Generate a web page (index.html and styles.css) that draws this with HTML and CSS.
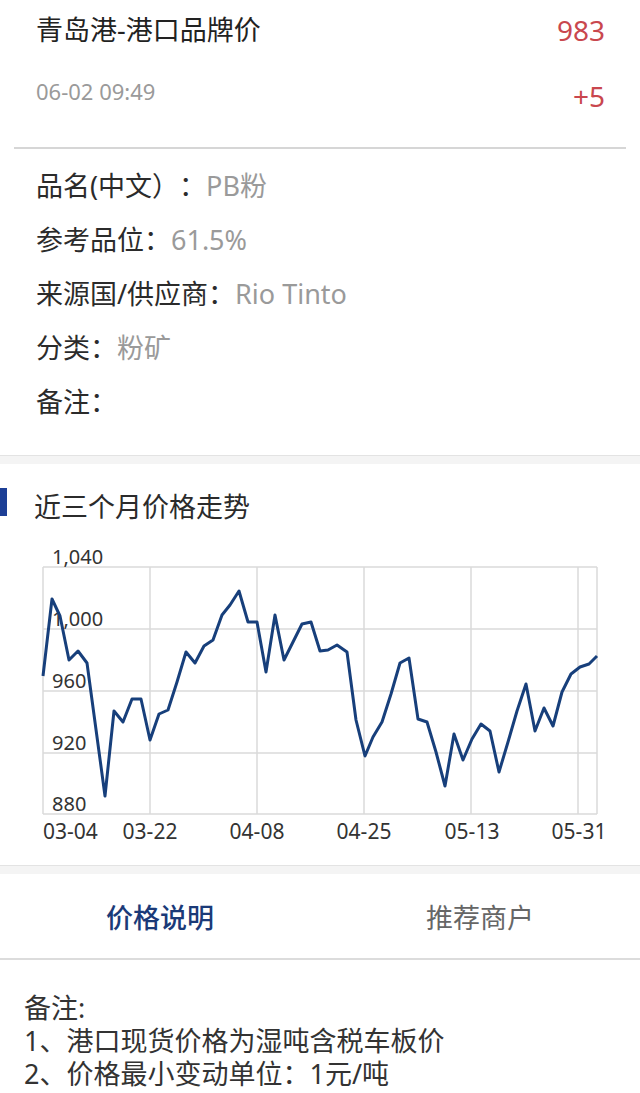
FILE: index.html
```html
<!DOCTYPE html>
<html lang="zh-CN">
<head>
  <meta charset="UTF-8" />
  <meta name="viewport" content="width=device-width, initial-scale=1" />
  <title>青岛港-港口品牌价</title>
  <link rel="stylesheet" href="styles.css">
</head>
<body>
  <div class="header">
    <div class="header-row">
      <span class="title">青岛港-港口品牌价</span>
      <span class="price">983</span>
    </div>
    <div class="header-row sub">
      <span class="time">06-02 09:49</span>
      <span class="change">+5</span>
    </div>
  </div>
  <div class="divider"></div>

  <div class="info">
    <div class="info-row">品名(中文）：<span class="value">PB粉</span></div>
    <div class="info-row">参考品位：<span class="value">61.5%</span></div>
    <div class="info-row">来源国/供应商：<span class="value">Rio Tinto</span></div>
    <div class="info-row">分类：<span class="value">粉矿</span></div>
    <div class="info-row">备注：</div>
  </div>

  <div class="section chart-section">
    <div class="section-title">
      <span class="bar"></span>
      <span>近三个月价格走势</span>
    </div>
    <svg class="chart" width="640" height="330" viewBox="0 528 640 330">
      <g stroke="#dadada" stroke-width="1.5">
        <line x1="43" y1="568" x2="597" y2="568" />
        <line x1="43" y1="630" x2="597" y2="630" />
        <line x1="43" y1="692" x2="597" y2="692" />
        <line x1="43" y1="754" x2="597" y2="754" />
        <line x1="43" y1="815" x2="597" y2="815" />
        <line x1="43" y1="568" x2="43" y2="815" />
        <line x1="150" y1="568" x2="150" y2="815" />
        <line x1="257" y1="568" x2="257" y2="815" />
        <line x1="364" y1="568" x2="364" y2="815" />
        <line x1="471" y1="568" x2="471" y2="815" />
        <line x1="578" y1="568" x2="578" y2="815" />
        <line x1="597" y1="568" x2="597" y2="815" />
      </g>
      <g class="axis-label">
        <text x="52" y="565">1,040</text>
        <text x="52" y="627">1,000</text>
        <text x="52" y="689">960</text>
        <text x="52" y="751">920</text>
        <text x="52" y="812">880</text>
      </g>
      <g class="axis-label date">
        <text x="43" y="840">03-04</text>
        <text x="150" y="840" text-anchor="middle">03-22</text>
        <text x="257" y="840" text-anchor="middle">04-08</text>
        <text x="364" y="840" text-anchor="middle">04-25</text>
        <text x="472" y="840" text-anchor="middle">05-13</text>
        <text x="579" y="840" text-anchor="middle">05-31</text>
      </g>
      <polyline class="trend" points="43,677 52,600 60,617 69,661 78,652 87,664 105,797 114,712 123,723 132,700 141,700 150,741 159,715 168,711 177,683 186,653 195,664 204,647 213,641 222,616 230,606 239,592 248,623 257,623 266,673 275,616 284,661 293,643 302,625 311,623 320,652 328,651 337,646 347,653 356,721 365,757 373,738 382,723 391,695 400,664 409,659 418,720 427,723 436,753 445,787 454,735 463,761 472,740 481,725 490,732 499,773 508,743 517,712 526,685 535,732 544,709 553,727 562,693 571,675 580,668 589,665 597,657" />
    </svg>
  </div>

  <div class="section tabs">
    <div class="tab active">价格说明</div>
    <div class="tab">推荐商户</div>
  </div>

  <div class="notes">
    <div>备注:</div>
    <div>1、港口现货价格为湿吨含税车板价</div>
    <div>2、价格最小变动单位：1元/吨</div>
    <div>3、港口价格标准参考价格为目前主流价格及成交价</div>
  </div>
</body>
</html>
```

FILE: styles.css
```css
body {
  margin: 0;
  font-family: "Noto Sans", "Noto Sans CJK SC", sans-serif;
  color: #2b2b2b;
  background: #fff;
  overflow: hidden;
  text-spacing-trim: space-all;
}

.header {
  padding: 12px 35px 0 36px;
}

.header-row {
  display: flex;
  justify-content: space-between;
  align-items: flex-start;
}

.title {
  font-size: 27px;
  line-height: 36px;
  color: #222;
}

.price {
  font-size: 28px;
  line-height: 36px;
  color: #c9474e;
}

.header-row.sub {
  margin-top: 28px;
  height: 40px;
}

.time {
  font-size: 22px;
  line-height: 30px;
  color: #9a9a9a;
}

.change {
  font-size: 28px;
  line-height: 40px;
  color: #c9474e;
}

.divider {
  margin: 31px 14px 0;
  border-top: 2px solid #d6d6d6;
}

.info {
  padding: 10px 36px 26px;
  border-bottom: 1px solid #e3e3e3;
}

.info-row {
  font-size: 27px;
  line-height: 54px;
  color: #2b2b2b;
}

.info-row .value {
  color: #9a9a9a;
}

.section {
  border-top: 8px solid #f4f4f4;
}

.chart-section {
  padding: 23px 0 8px;
  border-bottom: 1px solid #e3e3e3;
}

.section-title {
  display: flex;
  align-items: flex-start;
  gap: 27px;
  font-size: 27px;
  line-height: 40px;
  color: #2b2b2b;
}

.section-title .bar {
  width: 7px;
  height: 28px;
  margin-top: 1px;
  background: #1d3f96;
}

.chart {
  display: block;
}

.axis-label {
  font-family: "Noto Sans", sans-serif;
  font-size: 20px;
  fill: #333;
}

.axis-label.date {
  font-size: 21px;
}

.trend {
  fill: none;
  stroke: #173f7b;
  stroke-width: 3;
  stroke-linejoin: round;
}

.tabs {
  display: flex;
  height: 84px;
  border-bottom: 2px solid #dcdcdc;
}

.tab {
  flex: 1;
  display: flex;
  align-items: center;
  justify-content: center;
  font-size: 27px;
  color: #666;
}

.tab.active {
  color: #1b3a78;
  font-weight: 500;
}

.notes {
  padding: 31px 24px 0;
  font-size: 27px;
  line-height: 33px;
  color: #333;
}
```
